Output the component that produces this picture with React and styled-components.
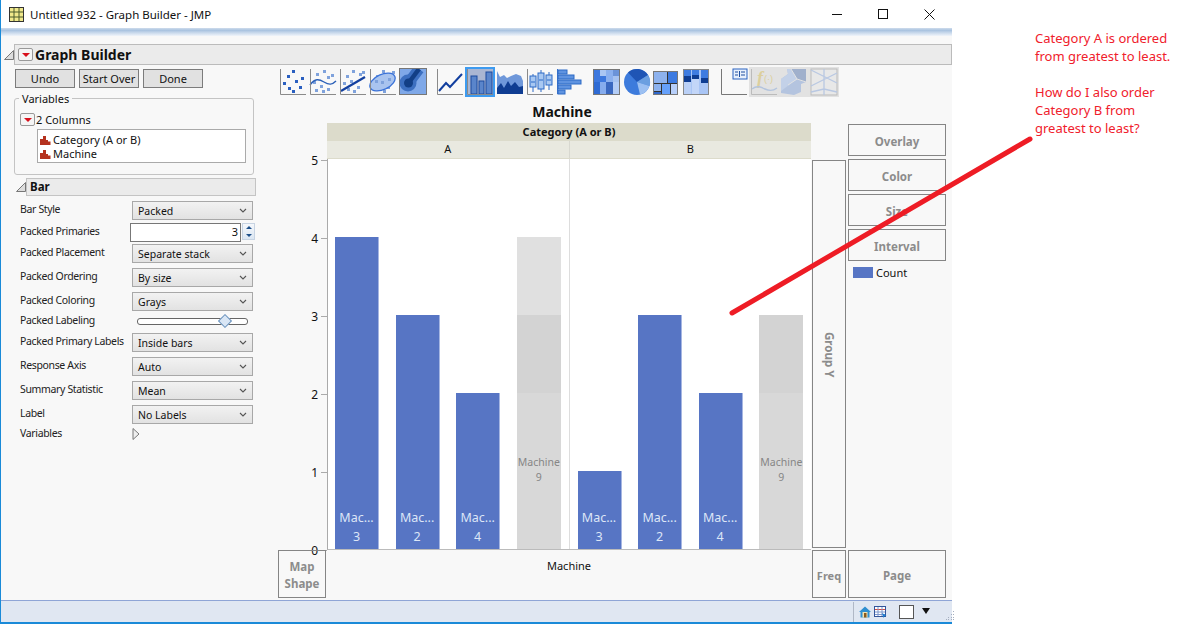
import React from 'react'
import styled, { createGlobalStyle } from 'styled-components'

const Global = createGlobalStyle`
    html, body {
        margin: 0;
        background: #fff;
    }
    body {
        font-family: "Noto Sans", "Open Sans", sans-serif;
        font-size: 11px;
        color: #111;
    }
`

const Frame = styled.div`
    position: relative;
    display: flex;
    width: 1193px;
    height: 624px;
    overflow: hidden;
`

const Window = styled.div`
    display: flex;
    flex-direction: column;
    width: 951px;
    height: 624px;
    border-left: 1px solid #1a8ad8;
`

const TitleBar = styled.div`
    display: flex;
    align-items: center;
    height: 28px;
    padding-left: 8px;
    background: #fff;
    font-size: 11.5px;
    gap: 6px;
`

const TitleText = styled.span`
    flex: 1;
`

const WinButtons = styled.div`
    display: flex;
    align-items: center;
    gap: 35px;
    padding-right: 17px;
`

const Band = styled.div`
    height: 8px;
    background: linear-gradient(#cfdcec, #a9c3e0 30%, #c9d9ec 60%, #f0f4fa);
`

const Body = styled.div`
    flex: 1;
    display: flex;
    flex-direction: column;
    background: #f8f8f8;
    padding-top: 8px;
`

const OutlineHeader = styled.div`
    display: flex;
    align-items: center;
    height: 21px;
    padding-left: 3px;
`

const Disclosure = styled.svg`
    flex: none;
    width: 10px;
    height: 10px;
`

const HeaderBar = styled.div`
    flex: 1;
    display: flex;
    align-items: center;
    align-self: stretch;
    gap: 2px;
    padding-left: 3px;
    box-sizing: border-box;
    background: #ebebeb;
    border: 1px solid #bbb;
    font-size: 14px;
    font-weight: 700;
`

const MenuButton = styled.span`
    display: inline-flex;
    align-items: center;
    justify-content: center;
    flex: none;
    width: 13px;
    height: 11px;
    background: #f5f5f5;
    border: 1px solid #999;
    border-radius: 2px;

    &::after {
        content: '';
        border-left: 4px solid transparent;
        border-right: 4px solid transparent;
        border-top: 4px solid #d8101c;
    }
`

const Main = styled.div`
    flex: 1;
    display: flex;
`

const LeftPanel = styled.div`
    flex: none;
    width: 277px;
    padding-left: 14px;
    box-sizing: border-box;
`

const ButtonRow = styled.div`
    display: flex;
    gap: 4px;
    margin-top: 4px;
`

const PushButton = styled.button`
    width: 60px;
    height: 19px;
    padding: 0;
    background: #e1e1e1;
    border: 1px solid #7c7c7c;
    font: inherit;
    font-size: 11px;
    color: #111;
`

const VarBox = styled.fieldset`
    width: 240px;
    height: 84px;
    box-sizing: border-box;
    margin: 3px 0 0 -1px;
    padding: 0 7px 0 5px;
    border: 1px solid #c4c4c4;
    border-radius: 3px;

    legend {
        padding: 0 3px;
        margin-left: -1px;
        line-height: 15px;
        font-size: 11px;
    }
`

const ColumnsLine = styled.div`
    display: flex;
    align-items: center;
    height: 15px;
    margin-top: 6px;
    gap: 1px;
    font-size: 11px;
`

const ColumnList = styled.div`
    width: 209px;
    height: 34px;
    box-sizing: border-box;
    margin: 2px 0 0 17px;
    padding-top: 2px;
    background: #fff;
    border: 1px solid #aaa;
`

const ColumnItem = styled.div`
    display: flex;
    align-items: center;
    gap: 2px;
    height: 14.5px;
    padding-left: 2px;
    font-size: 11px;
`

const BarHeader = styled.div`
    display: flex;
    align-items: center;
    margin: 3px 0 0 1px;
    height: 18px;
`

const BarTitle = styled.div`
    flex: none;
    width: 230px;
    height: 18px;
    line-height: 16px;
    box-sizing: border-box;
    padding-left: 3px;
    background: #ebebeb;
    border: 1px solid #c4c4c4;
    font-size: 11.5px;
    font-weight: 700;
`

const Options = styled.div`
    display: flex;
    flex-direction: column;
    margin: 5px 0 0 5px;
`

const OptionRow = styled.div`
    display: flex;
    width: 233px;
    height: ${p => p.$h || 19}px;
    margin-top: ${p => p.$mt || 0}px;
`

const OptionLabel = styled.div`
    flex: none;
    width: 112px;
    line-height: 16px;
    white-space: nowrap;
    font-size: 10.5px;
    letter-spacing: -0.35px;
    color: #222;
`

const SelectBox = styled.div`
    flex: 1;
    display: flex;
    align-items: center;
    justify-content: space-between;
    padding: 0 5px 0 5px;
    background: linear-gradient(#f2f2f2, #e2e2e2);
    border: 1px solid #a8a8a8;
    font-size: 10.5px;
`

const NumberField = styled.div`
    flex: none;
    display: flex;
    margin-left: -2px;
`

const NumberInput = styled.div`
    width: 109px;
    height: 17px;
    line-height: 16px;
    text-align: right;
    background: #fff;
    border: 1px solid #777;
    font-size: 11px;

    span {
        margin-right: 2px;
    }
`

const Spinner = styled.div`
    display: flex;
    flex-direction: column;
    justify-content: space-around;
    align-items: center;
    width: 13px;
    height: 17px;
    margin-left: 1px;
    background: linear-gradient(#f4f7fb, #dbe6f2);
    border: 1px solid #c7d3e2;
    box-sizing: border-box;
`

const SpinArrow = styled.span`
    border-left: 3px solid transparent;
    border-right: 3px solid transparent;
    ${p => p.$up ? 'border-bottom: 3px solid #1c4f8a;' : 'border-top: 3px solid #1c4f8a;'}
`

const SliderTrack = styled.div`
    position: relative;
    flex: 1;
    height: 5px;
    margin: 6px 5px 0 5px;
    background: #fff;
    border: 1px solid #666;
    border-radius: 3px;
`

const SliderThumb = styled.span`
    position: absolute;
    top: -3px;
    left: 82px;
    width: 8px;
    height: 8px;
    background: #d9e6f5;
    border: 1px solid #6b93bd;
    transform: rotate(45deg);
`

const GraphArea = styled.div`
    flex: none;
    width: 669px;
`

const Toolbar = styled.div`
    display: flex;
    gap: 7px;
    margin-top: 2px;
    height: 30px;
`

const ToolGroup = styled.div`
    display: flex;
`

const Tool = styled.div`
    display: flex;
    align-items: center;
    justify-content: center;
    box-sizing: border-box;
    width: 30px;
    height: 30px;
    ${p => p.$on && 'background: #aab6d2; outline: 2px solid #3d9bf0; outline-offset: -2px;'}
    ${p => p.$off && 'background: #e2e2e2;'}
`

const PlotTitle = styled.div`
    height: 21px;
    margin-top: 5px;
    padding-right: 101px;
    line-height: 19px;
    text-align: center;
    font-size: 14px;
    font-weight: 700;
`

const GraphGrid = styled.div`
    display: grid;
    grid-template-columns: 49px 484px 37px 98px;
    grid-template-rows: 36px 390px 49px;
`

const FrameHead = styled.div`
    grid-column: 2;
    grid-row: 1;
    display: flex;
    flex-direction: column;
`

const GroupHead = styled.div`
    height: 18px;
    line-height: 18px;
    text-align: center;
    background: #dcdbcb;
    font-size: 11px;
    font-weight: 700;
`

const LevelRow = styled.div`
    flex: 1;
    display: flex;
    background: #e9e9e0;
    border-bottom: 1px solid #dcdbcb;
`

const Level = styled.div`
    flex: 1;
    line-height: 16px;
    text-align: center;
    border-left: ${p => p.$sep ? '1px solid #d8d8d0' : 'none'};
    font-size: 11px;
`

const YAxis = styled.div`
    grid-column: 1;
    grid-row: 2;
    display: flex;
    flex-direction: column;
    justify-content: space-between;
    padding: 1px 0 0;
    height: 391px;
    box-sizing: border-box;
`

const Tick = styled.div`
    display: flex;
    align-items: center;
    justify-content: flex-end;
    height: 0;
    font-size: 12px;

    &::after {
        content: '';
        width: 6px;
        height: 1px;
        margin-left: 3px;
        background: #aaa;
    }
`

const Plot = styled.div`
    grid-column: 2;
    grid-row: 2;
    display: flex;
    background: #fff;
    border-left: 1px solid #aaa;
    border-bottom: 1px solid #bbb;
    margin-bottom: -1px;
    height: 391px;
    box-sizing: border-box;
`

const Panel = styled.div`
    flex: 1;
    display: flex;
    align-items: flex-end;
    gap: 16.6px;
    padding-left: ${p => p.$sep ? 8 : 7}px;
    border-left: ${p => p.$sep ? '1px solid #ddd' : 'none'};
`

const Bar = styled.div`
    display: flex;
    flex-direction: column;
    justify-content: flex-end;
    align-items: center;
    flex: none;
    width: 44px;
    height: ${p => p.$v * 78}px;
    padding-bottom: 3px;
    box-sizing: border-box;
    background: #5775c4;
    border-right: 1px solid #a6b6e2;
    color: #dde6f7;
    line-height: 19px;
    font-size: 12.5px;
`

const PackedStack = styled.div`
    display: flex;
    flex-direction: column;
    flex: none;
    width: 44px;
`

const StackPart = styled.div`
    height: ${p => p.$v * 78}px;
    background: ${p => p.$c};
`

const PackedBase = styled(StackPart)`
    box-sizing: border-box;
    padding-top: 62px;
    text-align: center;
    line-height: 15px;
    font-size: 10.5px;
    color: #868686;
`

const DropZones = styled.div`
    grid-column: 4;
    grid-row: 1 / span 2;
    display: flex;
    flex-direction: column;
    gap: 3px;
    margin-top: 1px;
`

const DropZone = styled.div`
    display: flex;
    align-items: center;
    justify-content: center;
    box-sizing: border-box;
    height: ${p => p.$h || 32}px;
    padding-top: 2px;
    text-align: center;
    line-height: 17px;
    border: 1px solid #858585;
    color: #8c8c8c;
    font-size: 11.5px;
    font-weight: 700;
`

const GroupZone = styled(DropZone)`
    grid-column: 3;
    grid-row: 2;
    width: 34px;
    height: 388px;
    margin: 1px 0 0 1px;

    span {
        writing-mode: vertical-rl;
    }
`

const Legend = styled.div`
    display: flex;
    align-items: center;
    gap: 3px;
    margin: 0 0 0 5px;
    height: 16px;
    font-size: 11px;
`

const Swatch = styled.span`
    width: 20px;
    height: 11px;
    background: #5775c4;
`

const MapZone = styled(DropZone)`
    grid-column: 1;
    grid-row: 3;
    width: 48px;
    height: 48px;
    margin-top: 1px;
`

const XLabel = styled.div`
    grid-column: 2;
    grid-row: 3;
    text-align: center;
    line-height: 33px;
    font-size: 11px;
`

const FreqZone = styled(DropZone)`
    grid-column: 3;
    grid-row: 3;
    width: 34px;
    height: 48px;
    margin: 1px 0 0 1px;
    font-size: 11px;
`

const PageZone = styled(DropZone)`
    grid-column: 4;
    grid-row: 3;
    height: 48px;
    margin-top: 1px;
`

const StatusBar = styled.div`
    flex: none;
    display: flex;
    align-items: center;
    height: 21px;
    padding-left: 852px;
    background: #e0e7f2;
    border-top: 1px solid #8fa5d6;
    border-bottom: 2px solid #1a8ad8;
`

const StatusTools = styled.div`
    display: flex;
    align-items: center;
    height: 20px;
    padding-left: 5px;
    border-left: 1px solid #b0b8c6;
    gap: 3px;
`

const StatusSquare = styled.span`
    width: 13px;
    height: 12px;
    margin-left: 9px;
    background: #fff;
    border: 1px solid #555;
`

const StatusArrow = styled.span`
    margin: 0 0 2px 5px;
    border-left: 4px solid transparent;
    border-right: 4px solid transparent;
    border-top: 6px solid #111;
`

const Grip = styled.svg`
    width: 11px;
    height: 11px;
    margin: 7px 0 0 12px;
`

const Note = styled.div`
    padding: 29px 0 0 83px;
    width: 160px;
    line-height: 18px;
    font-size: 13px;
    color: #f0202c;

    p {
        margin: 0 0 18px;
        white-space: nowrap;
    }
`

const Arrow = styled.svg`
    position: absolute;
    left: 0;
    top: 0;
    pointer-events: none;
`

const Dots = ({ pts, fill = '#2a5fc0' }) => pts.map(([x, y], i) => (
    <rect key={i} x={x} y={y} width="3" height="3" fill={fill} />
))

const Axes = ({ c = '#8a8a8a' }) => <path d="M1.5 1V26.5H27" fill="none" stroke={c} />

const lightDots = [[14, 2], [7, 5], [18, 8], [4, 13], [22, 6], [11, 17], [18, 20], [6, 21], [13, 22]]
const midDots = [[13, 2], [7, 7], [20, 5], [4, 14], [23, 3], [11, 12], [18, 18], [8, 20], [14, 22]]

const ICONS = [
    <>
        <Dots pts={[[13, 2], [8, 7], [4, 14], [16, 12], [22, 9], [20, 18], [9, 19], [13, 22]]} />
        <Axes />
    </>,
    <>
        <Dots fill="#7fa2dc" pts={lightDots} />
        <path d="M1 17C6 10 10 11 15 14S23 17 27 13" fill="none" stroke="#2b60b8" strokeWidth="1.4" />
        <Axes />
    </>,
    <>
        <Dots fill="#7fa2dc" pts={midDots} />
        <path d="M2 23L26 9" stroke="#123f9f" strokeWidth="2.2" />
        <Axes />
    </>,
    <>
        <Dots fill="#7fa2dc" pts={midDots} />
        <ellipse cx="13.5" cy="14" rx="13.5" ry="7.5" transform="rotate(-25 13.5 14)" fill="#a9c4ef" stroke="#3a72d8" strokeWidth="1.3" />
        <Dots fill="#7fa2dc" pts={[[12, 13], [6, 12], [19, 10]]} />
        <Axes />
    </>,
    <>
        <rect x="0.5" y="0.5" width="27" height="26" fill="#7fa8e8" stroke="#777" />
        <path d="M20 1L11 13" stroke="#3c6fc0" strokeWidth="11" />
        <circle cx="9" cy="15" r="8.5" fill="#3c6fc0" />
        <path d="M20 1L11 13" stroke="#123f86" strokeWidth="4.5" />
        <circle cx="9.5" cy="15" r="4.5" fill="#123f86" />
        <rect x="0.5" y="0.5" width="27" height="26" fill="none" stroke="#777" />
    </>,
    <>
        <path d="M3 23L10 15L14 19L26 6" fill="none" stroke="#123f9f" strokeWidth="2" />
        <Axes />
    </>,
    <>
        <rect x="5" y="8" width="6" height="18" fill="#5a85cb" stroke="#1d4a9d" />
        <rect x="13" y="13" width="5" height="13" fill="#5a85cb" stroke="#1d4a9d" />
        <rect x="20" y="4" width="6" height="22" fill="#5a85cb" stroke="#1d4a9d" />
        <Axes />
    </>,
    <>
        <path d="M1 3L4 9L8 7L11 10L15 8L20 6L25 8L27 13V26H1Z" fill="#6f98da" />
        <path d="M1 20L5 15L8 20L12 13L15 18L19 14L23 19L27 18V26H1Z" fill="#0f3d92" />
    </>,
    <>
        <path d="M7 6V24M15 2V24M23 4V22" stroke="#2d6ac6" />
        <rect x="4" y="8" width="6" height="11" fill="#a8c8f2" stroke="#2d6ac6" />
        <rect x="12" y="5" width="6" height="16" fill="#a8c8f2" stroke="#2d6ac6" />
        <rect x="20" y="7" width="6" height="10" fill="#a8c8f2" stroke="#2d6ac6" />
        <path d="M5 14H9M13 12H17M21 12H25" stroke="#2d6ac6" />
        <Axes />
    </>,
    <>
        <path d="M1.5 1V26" stroke="#3d74cc" />
        <rect x="2" y="2" width="9" height="4" fill="#5f93e0" stroke="#2d6ac6" />
        <rect x="2" y="7" width="16" height="4" fill="#5f93e0" stroke="#2d6ac6" />
        <rect x="2" y="12" width="23" height="4" fill="#5f93e0" stroke="#2d6ac6" />
        <rect x="2" y="17" width="13" height="4" fill="#5f93e0" stroke="#2d6ac6" />
        <rect x="2" y="22" width="7" height="4" fill="#5f93e0" stroke="#2d6ac6" />
    </>,
    <>
        <rect x="0.5" y="1.5" width="26" height="25" fill="#6f9ae0" stroke="#777" />
        <rect x="1" y="2" width="6" height="12" fill="#3d78de" />
        <rect x="7" y="2" width="6" height="6" fill="#aac6f3" />
        <rect x="7" y="8" width="6" height="6" fill="#3d78de" />
        <rect x="13" y="2" width="7" height="12" fill="#8bb0ee" />
        <rect x="20" y="2" width="6" height="6" fill="#6b93d8" />
        <rect x="20" y="8" width="6" height="6" fill="#a6c2f0" />
        <rect x="1" y="14" width="6" height="12" fill="#2f6bd4" />
        <rect x="7" y="14" width="6" height="12" fill="#86aced" />
        <rect x="13" y="14" width="7" height="12" fill="#3a68c0" />
        <rect x="20" y="14" width="6" height="12" fill="#b4cdf6" />
    </>,
    <>
        <circle cx="14" cy="14" r="13" fill="#3d7bdc" />
        <path d="M14 14L5 4.5A13 13 0 0 1 25 7Z" fill="#1f55b5" />
        <path d="M14 14L25 7A13 13 0 0 1 26.5 18Z" fill="#6b9fe0" />
        <path d="M14 14L26.5 18A13 13 0 0 1 17 26.5Z" fill="#9cc0f2" />
    </>,
    <>
        <rect x="0.5" y="3.5" width="24" height="23" fill="#333" stroke="#777" />
        <rect x="1" y="4" width="13" height="11" fill="#8db2ee" />
        <rect x="15" y="4" width="9" height="11" fill="#3d7ae0" />
        <rect x="1" y="16" width="7" height="7" fill="#8db2ee" />
        <rect x="1" y="24" width="7" height="2" fill="#2f68cc" />
        <rect x="9" y="16" width="8" height="10" fill="#66a1fb" />
        <rect x="18" y="16" width="6" height="10" fill="#b7cffa" />
    </>,
    <>
        <rect x="0.5" y="1.5" width="25" height="25" fill="#a9c5f5" stroke="#888" />
        <rect x="1" y="2" width="7" height="6" fill="#3f7ce0" />
        <rect x="1" y="8" width="7" height="6" fill="#0f3d92" />
        <rect x="1" y="14" width="7" height="12" fill="#bad0f6" />
        <rect x="9" y="2" width="7" height="5" fill="#3f7ce0" />
        <rect x="9" y="7" width="7" height="4" fill="#0f3d92" />
        <rect x="9" y="11" width="7" height="15" fill="#c3d6f8" />
        <rect x="18" y="2" width="7" height="8" fill="#3f7ce0" />
        <rect x="18" y="10" width="7" height="5" fill="#0f3d92" />
        <rect x="18" y="15" width="7" height="11" fill="#a9c5f5" />
    </>,
    <>
        <path d="M1.5 1V26.5H27" fill="none" stroke="#777" />
        <rect x="13" y="1" width="14" height="10" fill="#e8f0fc" stroke="#2a62c0" />
        <path d="M15 4H18M15 7H18M21 4H25M21 7H25M19.5 3V9" stroke="#1f4f9f" />
    </>,
    <>
        <text x="7" y="16" fontFamily="Liberation Serif, serif" fontStyle="italic" fontWeight="700" fontSize="18" fill="#dccf9c">f</text>
        <text x="14" y="14" fontFamily="Liberation Sans, sans-serif" fontSize="9" fill="#dccf9c">(·)</text>
        <path d="M2 21C7 17 11 19 15 21S23 23 27 20" fill="none" stroke="#b3c4de" strokeWidth="1.4" />
        <Axes c="#bbb" />
    </>,
    <>
        <path d="M7 1H26V14L21 16V24L14 27L1 25V11L8 6Z" fill="#b4c4df" />
        <path d="M11 1H26V14L17 11Z" fill="#a0b0cc" />
        <path d="M7 1L11 1L17 11L1 23V11L8 6Z" fill="#c3d1e8" />
        <path d="M17 11L26 14M17 11L11 1M17 11L8 17" stroke="#e2e2e2" />
    </>,
    <>
        <rect x="1" y="1" width="26" height="26" fill="#e8e8e8" stroke="#bbb" />
        <path d="M14 1V27M1 2L27 15M1 18L27 5M1 24L14 21L27 24" fill="none" stroke="#b9c8e2" strokeWidth="1.3" />
    </>,
]

const GROUPS = [[0, 5], [5, 10], [10, 14], [14, 18]]

const ToolIcon = ({ n }) => (
    <Tool $on={n === 6} $off={n > 14}>
        <svg width="28" height="28" viewBox="0 0 28 28">{ICONS[n]}</svg>
    </Tool>
)

const Chevron = () => (
    <svg width="8" height="5" viewBox="0 0 8 5">
        <path d="M1 1L4 4L7 1" fill="none" stroke="#555" strokeWidth="1.1" />
    </svg>
)

const ColumnIcon = () => (
    <svg width="11" height="11" viewBox="0 0 11 11">
        <path d="M0 11V5H3V2H6V6H8V7.5H10.5V11Z" fill="#b5321f" />
    </svg>
)

const Option = ({ label, value, mt }) => (
    <OptionRow $mt={mt}>
        <OptionLabel>{label}</OptionLabel>
        <SelectBox>{value}<Chevron /></SelectBox>
    </OptionRow>
)

const Packed = ({ parts }) => (
    <PackedStack>
        {parts.map(([v, c]) => <StackPart key={c} $v={v} $c={c} />)}
        <PackedBase $v={2} $c="#d8d8d8">Machine<br />9</PackedBase>
    </PackedStack>
)

const MacBar = ({ v, n }) => <Bar $v={v}><span>Mac...</span><span>{n}</span></Bar>

export default function App() {
    return (
        <Frame>
            <Global />
            <Window>
                <TitleBar>
                    <svg width="15" height="15" viewBox="0 0 15 15">
                        <rect x="0.5" y="0.5" width="14" height="14" fill="#f0e88c" stroke="#333" />
                        <path d="M5 1V14M10 1V14M1 5H14M1 10H14" stroke="#4b5a2c" />
                    </svg>
                    <TitleText>Untitled 932 - Graph Builder - JMP</TitleText>
                    <WinButtons>
                        <svg width="11" height="11" viewBox="0 0 11 11"><path d="M0 5.5H10" stroke="#111" /></svg>
                        <svg width="11" height="11" viewBox="0 0 11 11"><rect x="0.5" y="0.5" width="9" height="9" fill="none" stroke="#111" /></svg>
                        <svg width="11" height="11" viewBox="0 0 11 11"><path d="M0.5 0.5L10.5 10.5M10.5 0.5L0.5 10.5" stroke="#111" /></svg>
                    </WinButtons>
                </TitleBar>
                <Band />
                <Body>
                    <OutlineHeader>
                        <Disclosure viewBox="0 0 10 10"><path d="M0.5 9.5H9.5V0.5Z" fill="#ddd" stroke="#777" /></Disclosure>
                        <HeaderBar>
                            <MenuButton />
                            Graph Builder
                        </HeaderBar>
                    </OutlineHeader>
                    <Main>
                        <LeftPanel>
                            <ButtonRow>
                                <PushButton>Undo</PushButton>
                                <PushButton>Start Over</PushButton>
                                <PushButton>Done</PushButton>
                            </ButtonRow>
                            <VarBox>
                                <legend>Variables</legend>
                                <ColumnsLine><MenuButton />2 Columns</ColumnsLine>
                                <ColumnList>
                                    <ColumnItem><ColumnIcon />Category (A or B)</ColumnItem>
                                    <ColumnItem><ColumnIcon />Machine</ColumnItem>
                                </ColumnList>
                            </VarBox>
                            <BarHeader>
                                <Disclosure viewBox="0 0 10 10"><path d="M0.5 9.5H9.5V0.5Z" fill="#ddd" stroke="#777" /></Disclosure>
                                <BarTitle>Bar</BarTitle>
                            </BarHeader>
                            <Options>
                                <Option label="Bar Style" value="Packed" />
                                <OptionRow $h={18} $mt={3}>
                                    <OptionLabel>Packed Primaries</OptionLabel>
                                    <NumberField>
                                        <NumberInput><span>3</span></NumberInput>
                                        <Spinner><SpinArrow $up /><SpinArrow /></Spinner>
                                    </NumberField>
                                </OptionRow>
                                <Option label="Packed Placement" value="Separate stack" mt={3} />
                                <Option label="Packed Ordering" value="By size" mt={5} />
                                <Option label="Packed Coloring" value="Grays" mt={5} />
                                <OptionRow $h={20} $mt={1}>
                                    <OptionLabel>Packed Labeling</OptionLabel>
                                    <SliderTrack><SliderThumb /></SliderTrack>
                                </OptionRow>
                                <Option label="Packed Primary Labels" value="Inside bars" mt={1} />
                                <Option label="Response Axis" value="Auto" mt={5} />
                                <Option label="Summary Statistic" value="Mean" mt={5} />
                                <Option label="Label" value="No Labels" mt={5} />
                                <OptionRow $h={16} $mt={1}>
                                    <OptionLabel>Variables</OptionLabel>
                                    <svg width="8" height="12" viewBox="0 0 8 12" style={{ marginTop: 3 }}>
                                        <path d="M1 0.5L7 6L1 11.5Z" fill="#eee" stroke="#777" />
                                    </svg>
                                </OptionRow>
                            </Options>
                        </LeftPanel>
                        <GraphArea>
                            <Toolbar>
                                {GROUPS.map(([from, to]) => (
                                    <ToolGroup key={from}>
                                        {ICONS.slice(from, to).map((_, i) => <ToolIcon key={i} n={from + i} />)}
                                    </ToolGroup>
                                ))}
                            </Toolbar>
                            <PlotTitle>Machine</PlotTitle>
                            <GraphGrid>
                                <FrameHead>
                                    <GroupHead>Category (A or B)</GroupHead>
                                    <LevelRow>
                                        <Level>A</Level>
                                        <Level $sep>B</Level>
                                    </LevelRow>
                                </FrameHead>
                                <YAxis>
                                    {[5, 4, 3, 2, 1, 0].map(t => <Tick key={t}>{t}</Tick>)}
                                </YAxis>
                                <Plot>
                                    <Panel>
                                        <MacBar v={4} n={3} />
                                        <MacBar v={3} n={2} />
                                        <MacBar v={2} n={4} />
                                        <Packed parts={[[1, '#e0e0e0'], [1, '#d3d3d3']]} />
                                    </Panel>
                                    <Panel $sep>
                                        <MacBar v={1} n={3} />
                                        <MacBar v={3} n={2} />
                                        <MacBar v={2} n={4} />
                                        <Packed parts={[[1, '#d3d3d3']]} />
                                    </Panel>
                                </Plot>
                                <GroupZone><span>Group Y</span></GroupZone>
                                <DropZones>
                                    <DropZone>Overlay</DropZone>
                                    <DropZone>Color</DropZone>
                                    <DropZone>Size</DropZone>
                                    <DropZone>Interval</DropZone>
                                    <Legend><Swatch />Count</Legend>
                                </DropZones>
                                <MapZone>Map<br />Shape</MapZone>
                                <XLabel>Machine</XLabel>
                                <FreqZone>Freq</FreqZone>
                                <PageZone>Page</PageZone>
                            </GraphGrid>
                        </GraphArea>
                    </Main>
                </Body>
                <StatusBar>
                    <StatusTools>
                        <svg width="12" height="12" viewBox="0 0 12 12">
                            <path d="M6 0.5L12 6H10.5V11.5H1.5V6H0Z" fill="#2f8fd0" />
                            <rect x="3.5" y="6" width="5" height="5.5" fill="#f3e3b0" />
                            <rect x="5" y="7" width="2.5" height="4.5" fill="#8a5a1e" />
                        </svg>
                        <svg width="13" height="12" viewBox="0 0 13 12">
                            <rect x="0.5" y="0.5" width="11" height="10" fill="#fff" stroke="#33559a" />
                            <path d="M1 3.5H11" stroke="#d8483c" />
                            <path d="M1 6H11M1 8.5H11M4 1V10M8 1V10" stroke="#7d97cc" />
                            <path d="M8 7L12.5 9.5L10.5 10L9.5 12Z" fill="#1f7fd0" />
                        </svg>
                        <StatusSquare />
                        <StatusArrow />
                        <Grip viewBox="0 0 11 11">
                            {[[8, 1], [6, 4], [8, 4], [3, 7], [6, 7], [8, 7], [1, 9], [3, 9], [6, 9], [8, 9]].map(([x, y]) => (
                                <rect key={`${x}-${y}`} x={x} y={y} width="1" height="1" fill="#a4aebf" />
                            ))}
                        </Grip>
                    </StatusTools>
                </StatusBar>
            </Window>
            <Note>
                <p>Category A is ordered<br />from greatest to least.</p>
                <p>How do I also order<br />Category B from<br />greatest to least?</p>
            </Note>
            <Arrow width="1193" height="624" viewBox="0 0 1193 624">
                <path d="M732 313L1030 139" stroke="#ee1c25" strokeWidth="5" strokeLinecap="round" />
            </Arrow>
        </Frame>
    )
}
